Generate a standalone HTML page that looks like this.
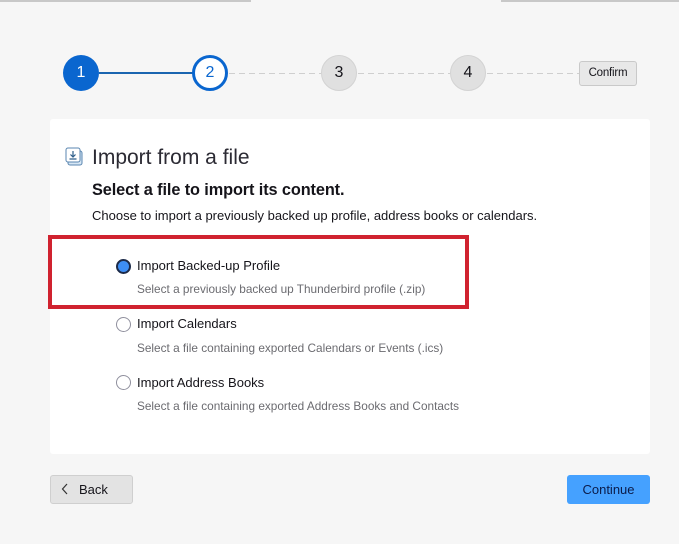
<!DOCTYPE html>
<html><head><meta charset="utf-8"><style>
*{margin:0;padding:0;box-sizing:border-box}
body{width:679px;height:544px;background:#f6f6f6;font-family:"Segoe UI","Liberation Sans",sans-serif;position:relative;overflow:hidden;color:#15141a}
.abs{position:absolute}
.topl{left:0;top:0;width:251px;height:2px;background:#c8c8c8}
.topr{left:501px;top:0;width:178px;height:2px;background:#c8c8c8}
.c{position:absolute;top:55px;width:36px;height:36px;border-radius:50%;text-align:center;line-height:36px;font-size:16px}
.line{position:absolute;top:72px;height:2px}
.dash{position:absolute;top:73px;height:1px;background:repeating-linear-gradient(90deg,#cfcfcf 0 6px,transparent 6px 10px)}
.card{left:50px;top:119px;width:600px;height:335px;background:#fff;border-radius:3px}
.radio{position:absolute;width:15px;height:15px;border-radius:50%;border:1px solid #8f8f9d;background:#fff}
.t{font-size:13px;color:#15141a}
.s{font-size:11.8px;color:#6b6b70}
</style></head><body>
<div class="abs topl"></div><div class="abs topr"></div>
<div class="line" style="left:99px;width:94px;background:#1a65b0"></div>
<div class="dash" style="left:229px;width:92px"></div>
<div class="dash" style="left:358px;width:92px"></div>
<div class="dash" style="left:487px;width:92px"></div>
<div class="c" style="left:63px;background:#0a66cf;color:#fff">1</div>
<div class="c" style="left:192px;background:#fff;border:3px solid #0a66cf;color:#0a66cf;line-height:30px">2</div>
<div class="c" style="left:321px;background:#e0e0e0;border:1px solid #d3d3d3;line-height:34px">3</div>
<div class="c" style="left:450px;background:#e0e0e0;border:1px solid #d3d3d3;line-height:34px">4</div>
<div class="abs" style="left:579px;top:61px;width:58px;height:25px;background:#e8e8e8;border:1px solid #c9c9c9;border-radius:3px;font-size:11.5px;text-align:center;line-height:23px;letter-spacing:-0.2px">Confirm</div>
<div class="abs card"></div>
<svg class="abs" style="left:65px;top:147px" width="19" height="20" viewBox="0 0 19 20"><rect x="3" y="4" width="14" height="14" rx="2" fill="#d6e6f4" stroke="#5a86b0"/><rect x="1" y="1" width="14" height="14" rx="2" fill="#fff" stroke="#5a86b0"/><path d="M8 4v6M5.5 7.5L8 10l2.5-2.5M4.5 12h7" stroke="#2d5d8a" fill="none" stroke-width="1.2"/></svg>
<div class="abs" style="left:92px;top:146px;font-size:21px;font-weight:300;color:#2b2a33">Import from a file</div>
<div class="abs" style="left:92px;top:181px;font-size:16.3px;font-weight:bold;letter-spacing:-0.1px">Select a file to import its content.</div>
<div class="abs" style="left:92px;top:208px;font-size:13px">Choose to import a previously backed up profile, address books or calendars.</div>
<div class="abs" style="left:48px;top:235px;width:421px;height:74px;border:4px solid #d0222f"></div>
<div class="radio" style="left:116px;top:259px;border:2px solid #1c2a48;background:#3d8ef5"></div>
<div class="abs t" style="left:137px;top:258px">Import Backed-up Profile</div>
<div class="abs s" style="left:137px;top:282px">Select a previously backed up Thunderbird profile (.zip)</div>
<div class="radio" style="left:116px;top:317px"></div>
<div class="abs t" style="left:137px;top:316px">Import Calendars</div>
<div class="abs s" style="left:137px;top:341px">Select a file containing exported Calendars or Events (.ics)</div>
<div class="radio" style="left:116px;top:375px"></div>
<div class="abs t" style="left:137px;top:375px">Import Address Books</div>
<div class="abs s" style="left:137px;top:399px">Select a file containing exported Address Books and Contacts</div>
<div class="abs" style="left:50px;top:475px;width:83px;height:29px;background:#e3e3e3;border:1px solid #cfcfcf;border-radius:3px;font-size:13px;line-height:27px;padding-left:28px">Back</div>
<svg class="abs" style="left:61px;top:483px" width="8" height="12"><path d="M6 1L1.5 6 6 11" stroke="#333" fill="none" stroke-width="1.2"/></svg>
<div class="abs" style="left:567px;top:475px;width:83px;height:29px;background:#45a1ff;border-radius:3px;font-size:13px;line-height:29px;text-align:center;color:#0b1c4a">Continue</div>
</body></html>
